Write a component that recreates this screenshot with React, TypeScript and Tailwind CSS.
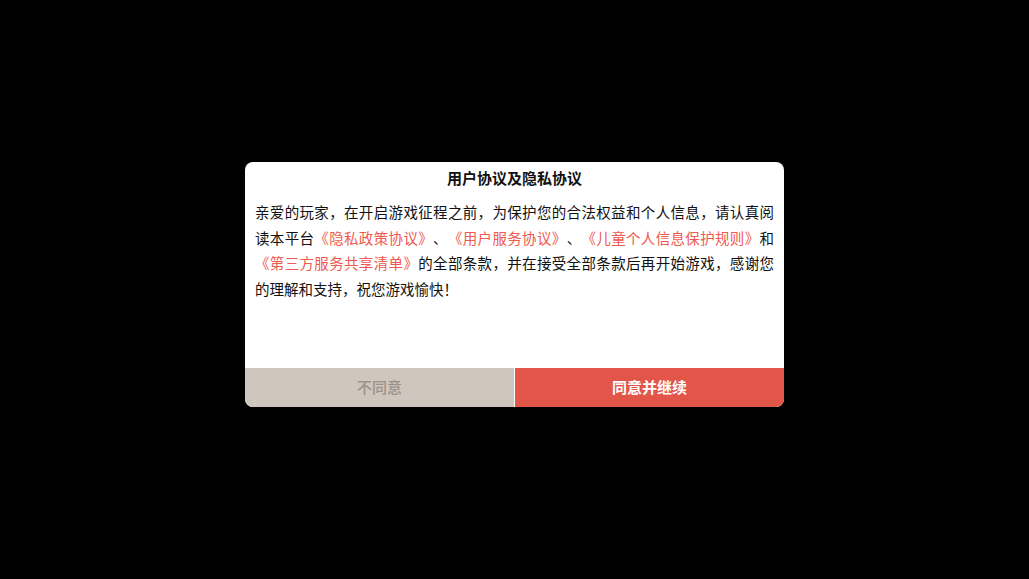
export default function App() {
  const font = '[font-family:"Noto_Sans_CJK_SC","Noto_Sans",sans-serif]'
  return (
    <main className={`w-[1029px] h-[579px] bg-black flex items-center justify-center ${font}`}>
      <div className="mb-[10px] w-[539px] h-[245px] bg-white rounded-[8px] overflow-hidden flex flex-col">
        <div className="h-[32px] flex items-center justify-center text-[15px] font-bold text-[#111]">
          用户协议及隐私协议
        </div>
        <div className="flex-1 px-[10px] pt-[5px] text-[14.5px] leading-[25.5px] text-[#111] [text-spacing-trim:space-all] [font-kerning:none]">
          <div className="whitespace-nowrap text-justify [text-align-last:justify]">
            亲爱的玩家，在开启游戏征程之前，为保护您的合法权益和个人信息，请认真阅
          </div>
          <div className="whitespace-nowrap text-justify [text-align-last:justify]">
            读本平台<span className="text-[#ee5a4f]">《隐私政策协议》</span>、<span className="text-[#ee5a4f]">《用户服务协议》</span>、<span className="text-[#ee5a4f]">《儿童个人信息保护规则》</span>和
          </div>
          <div className="whitespace-nowrap text-justify [text-align-last:justify]">
            <span className="text-[#ee5a4f]">《第三方服务共享清单》</span>的全部条款，并在接受全部条款后再开始游戏，感谢您
          </div>
          <div className="whitespace-nowrap">的理解和支持，祝您游戏愉快！</div>
        </div>
        <div className="h-[39px] flex">
          <button className="flex-1 bg-[#cfc6bd] text-[#9b928a] text-[15px] font-medium">不同意</button>
          <div className="w-px bg-white" />
          <button className="flex-1 bg-[#e25549] text-white text-[15px] font-bold">同意并继续</button>
        </div>
      </div>
    </main>
  )
}
